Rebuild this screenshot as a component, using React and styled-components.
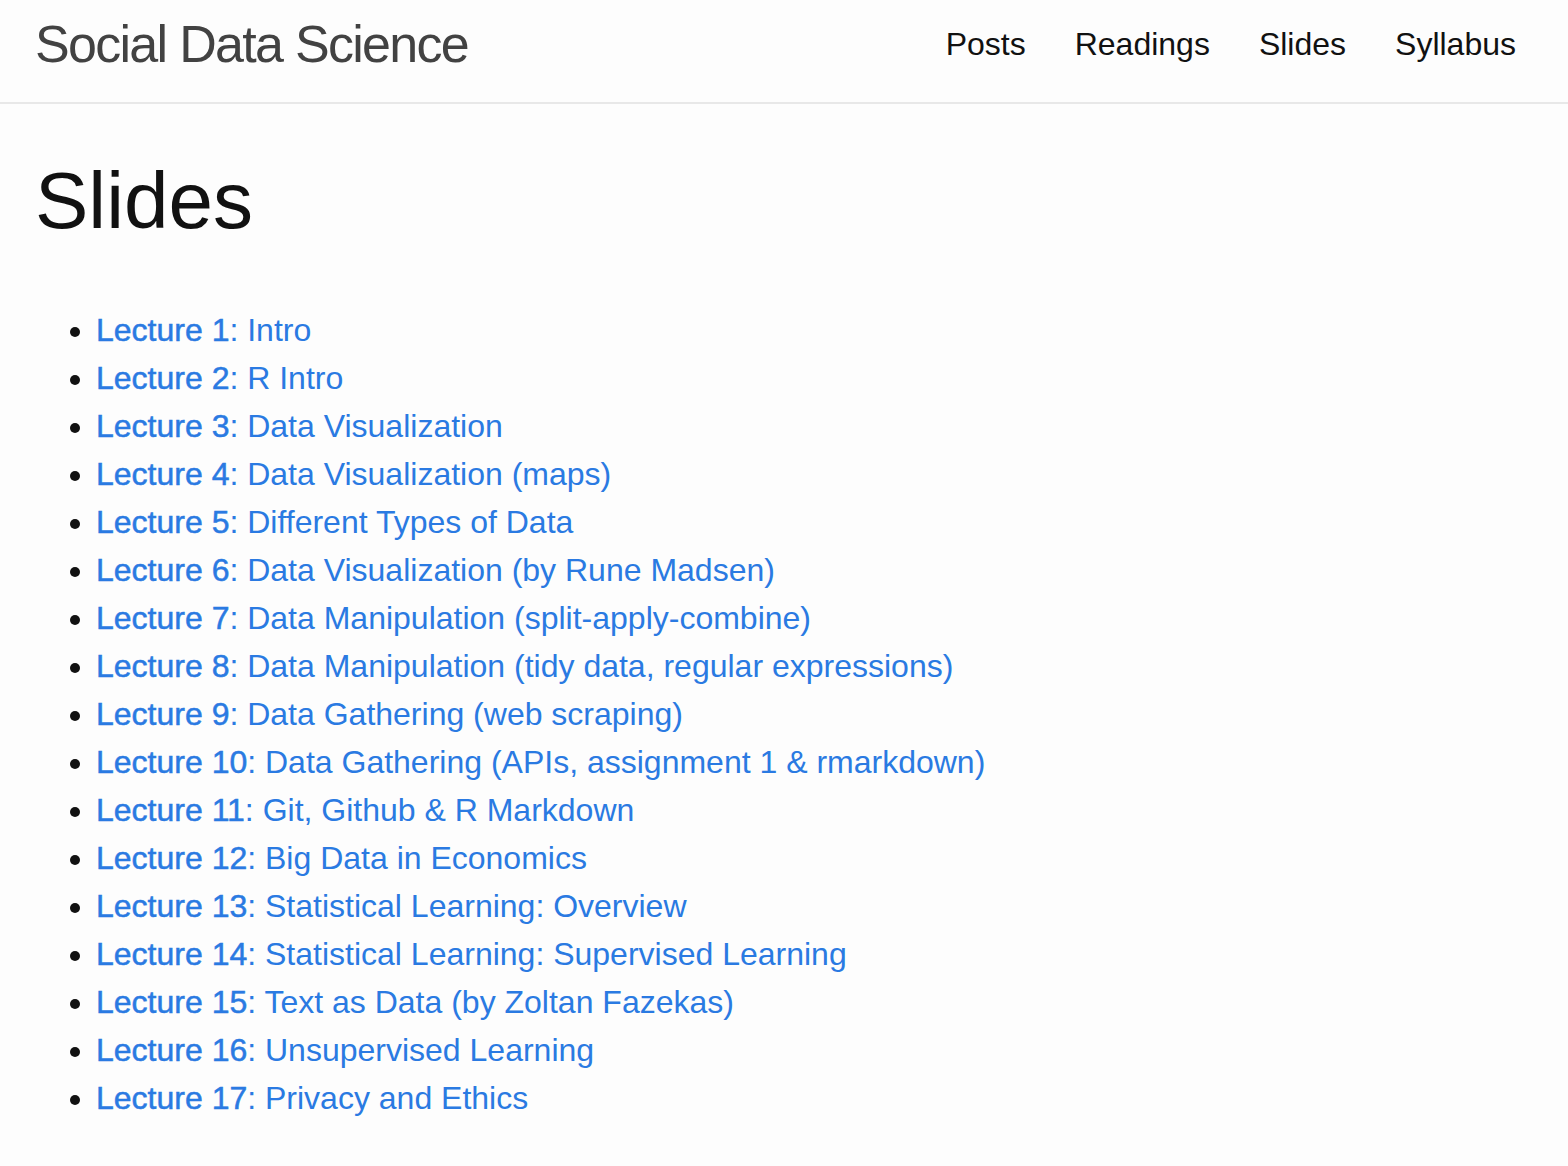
import React from "react";
import styled, { createGlobalStyle } from "styled-components";

const GlobalStyle = createGlobalStyle`
  html, body {
    margin: 0;
    padding: 0;
    background: #fdfdfd;
  }
  body {
    font-family: "Liberation Sans", Arial, sans-serif;
    color: #111111;
    -webkit-font-smoothing: antialiased;
  }
`;

const Header = styled.header`
  height: 102px;
  border-bottom: 2px solid #e8e8e8;
  display: flex;
  justify-content: space-between;
  align-items: flex-start;
  padding: 0 52px 0 35px;
`;

const SiteTitle = styled.a`
  display: block;
  margin-top: 14px;
  font-size: 52px;
  line-height: 60px;
  letter-spacing: -1.7px;
  color: #424242;
  text-decoration: none;
`;

const Nav = styled.nav`
  display: flex;
  gap: 49px;
  margin-top: 20px;
`;

const NavLink = styled.a`
  font-size: 32px;
  line-height: 48px;
  color: #111111;
  text-decoration: none;
`;

const Main = styled.main`
  padding: 49px 52px 40px 35px;
`;

const PageTitle = styled.h1`
  margin: 0;
  font-size: 80px;
  line-height: 96px;
  font-weight: 400;
  letter-spacing: 0;
  color: #111111;
`;

const List = styled.ul`
  margin: 57px 0 0 0;
  padding-left: 61px;
  list-style: disc;
`;

const Item = styled.li`
  font-size: 32px;
  line-height: 48px;
  color: #111111;
`;

const Link = styled.a`
  color: #2a7ae2;
  text-decoration: none;
`;

const Strong = styled.span`
  -webkit-text-stroke: 0.5px #2a7ae2;
`;

const lectures = [
  "Intro",
  "R Intro",
  "Data Visualization",
  "Data Visualization (maps)",
  "Different Types of Data",
  "Data Visualization (by Rune Madsen)",
  "Data Manipulation (split-apply-combine)",
  "Data Manipulation (tidy data, regular expressions)",
  "Data Gathering (web scraping)",
  "Data Gathering (APIs, assignment 1 & rmarkdown)",
  "Git, Github & R Markdown",
  "Big Data in Economics",
  "Statistical Learning: Overview",
  "Statistical Learning: Supervised Learning",
  "Text as Data (by Zoltan Fazekas)",
  "Unsupervised Learning",
  "Privacy and Ethics",
];

export default function App() {
  return (
    <>
      <GlobalStyle />
      <Header>
        <SiteTitle href="#">Social Data Science</SiteTitle>
        <Nav>
          <NavLink href="#">Posts</NavLink>
          <NavLink href="#">Readings</NavLink>
          <NavLink href="#">Slides</NavLink>
          <NavLink href="#">Syllabus</NavLink>
        </Nav>
      </Header>
      <Main>
        <PageTitle>Slides</PageTitle>
        <List>
          {lectures.map((t, i) => (
            <Item key={i}>
              <Link href="#">
                <Strong>Lecture {i + 1}</Strong>: {t}
              </Link>
            </Item>
          ))}
        </List>
      </Main>
    </>
  );
}
